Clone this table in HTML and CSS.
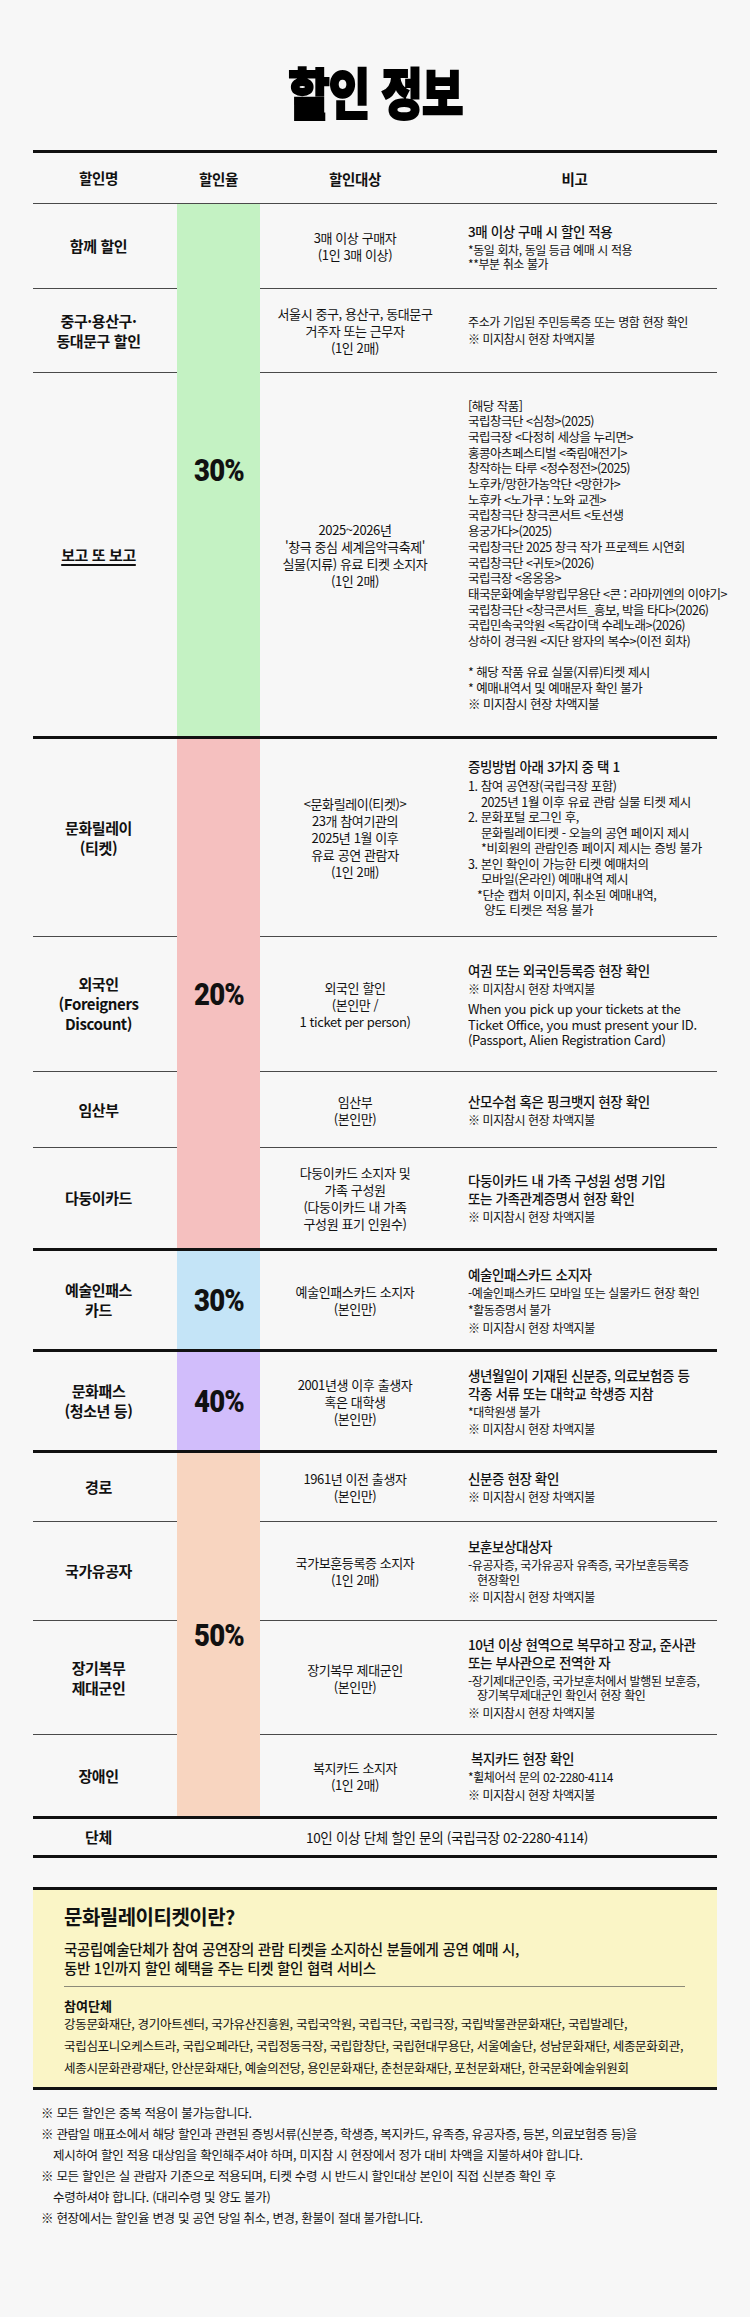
FILE: index.html
```html
<!DOCTYPE html>
<html lang="ko">
<head>
<meta charset="utf-8">
<title>할인 정보</title>
<link rel="stylesheet" href="styles.css">
</head>
<body>
<main class="page">
  <h1 class="title"><span>할인 정보</span></h1>

  <table class="dc">
    <colgroup><col class="c1"><col class="c2"><col class="c3"><col class="c4"></colgroup>
    <thead>
      <tr class="h52">
        <th class="nm">할인명</th><th>할인율</th><th>할인대상</th><th class="h4">비고</th>
      </tr>
    </thead>
    <tbody>
      <tr class="h85">
        <td class="nm">함께 할인</td>
        <td class="rate green" rowspan="3"><span>30%</span></td>
        <td class="tg">3매 이상 구매자<br>(1인 3매 이상)</td>
        <td class="nt"><p class="lead">3매 이상 구매 시 할인 적용</p><p class="sm tight">*동일 회차, 동일 등급 예매 시 적용<br>**부분 취소 불가</p></td>
      </tr>
      <tr class="h84">
        <td class="nm">중구·용산구·<br>동대문구 할인</td>
        <td class="tg">서울시 중구, 용산구, 동대문구<br>거주자 또는 근무자<br>(1인 2매)</td>
        <td class="nt"><p class="sm">주소가 기입된 주민등록증 또는 명함 현장 확인</p><p class="sm">※ 미지참시 현장 차액지불</p></td>
      </tr>
      <tr class="h365">
        <td class="nm"><u>보고 또 보고</u></td>
        <td class="tg">2025~2026년<br>'창극 중심 세계음악극축제'<br>실물(지류) 유료 티켓 소지자<br>(1인 2매)</td>
        <td class="nt"><p class="works">[해당 작품]<br>국립창극단 &lt;심청&gt;(2025)<br>국립극장 &lt;다정히 세상을 누리면&gt;<br>홍콩아츠페스티벌 &lt;죽림애전기&gt;<br>창작하는 타루 &lt;정수정전&gt;(2025)<br>노후카/망한가농악단 &lt;망한가&gt;<br>노후카 &lt;노가쿠 : 노와 교겐&gt;<br>국립창극단 창극콘서트 &lt;토선생<br>용궁가다&gt;(2025)<br>국립창극단 2025 창극 작가 프로젝트 시연회<br>국립창극단 &lt;귀토&gt;(2026)<br>국립극장 &lt;옹옹옹&gt;<br>태국문화예술부왕립무용단 &lt;콘 : 라마끼엔의 이야기&gt;<br>국립창극단 &lt;창극콘서트_흥보, 박을 타다&gt;(2026)<br>국립민속국악원 &lt;독갑이댁 수레노래&gt;(2026)<br>상하이 경극원 &lt;지단 왕자의 복수&gt;(이전 회차)<br><br>* 해당 작품 유료 실물(지류)티켓 제시<br>* 예매내역서 및 예매문자 확인 불가<br>※ 미지참시 현장 차액지불</p></td>
      </tr>

      <tr class="h199 gs">
        <td class="nm">문화릴레이<br>(티켓)</td>
        <td class="rate pink" rowspan="4"><span>20%</span></td>
        <td class="tg">&lt;문화릴레이(티켓)&gt;<br>23개 참여기관의<br>2025년 1월 이후<br>유료 공연 관람자<br>(1인 2매)</td>
        <td class="nt"><p class="lead">증빙방법 아래 3가지 중 택 1</p><p class="list">1. 참여 공연장(국립극장 포함)<br><span class="i1">2025년 1월 이후 유료 관람 실물 티켓 제시</span><br>2. 문화포털 로그인 후,<br><span class="i1">문화릴레이티켓 - 오늘의 공연 페이지 제시</span><br><span class="i1">*비회원의 관람인증 페이지 제시는 증빙 불가</span><br>3. 본인 확인이 가능한 티켓 예매처의<br><span class="i1">모바일(온라인) 예매내역 제시</span><br><span class="i2">*단순 캡처 이미지, 취소된 예매내역,</span><br><span class="i3">양도 티켓은 적용 불가</span></p></td>
      </tr>
      <tr class="h135">
        <td class="nm">외국인<br>(Foreigners<br>Discount)</td>
        <td class="tg">외국인 할인<br>(본인만 /<br>1 ticket per person)</td>
        <td class="nt"><p class="lead">여권 또는 외국인등록증 현장 확인</p><p class="sm">※ 미지참시 현장 차액지불</p><p class="en">When you pick up your tickets at the<br>Ticket Office, you must present your ID.<br>(Passport, Alien Registration Card)</p></td>
      </tr>
      <tr class="h76">
        <td class="nm">임산부</td>
        <td class="tg">임산부<br>(본인만)</td>
        <td class="nt"><p class="lead">산모수첩 혹은 핑크뱃지 현장 확인</p><p class="sm">※ 미지참시 현장 차액지불</p></td>
      </tr>
      <tr class="h102">
        <td class="nm">다둥이카드</td>
        <td class="tg">다둥이카드 소지자 및<br>가족 구성원<br>(다둥이카드 내 가족<br>구성원 표기 인원수)</td>
        <td class="nt"><p class="lead">다둥이카드 내 가족 구성원 성명 기입<br>또는 가족관계증명서 현장 확인</p><p class="sm">※ 미지참시 현장 차액지불</p></td>
      </tr>

      <tr class="h101 gs">
        <td class="nm">예술인패스<br>카드</td>
        <td class="rate blue"><span>30%</span></td>
        <td class="tg">예술인패스카드 소지자<br>(본인만)</td>
        <td class="nt"><p class="lead">예술인패스카드 소지자</p><p class="sm">-예술인패스카드 모바일 또는 실물카드 현장 확인</p><p class="sm">*활동증명서 불가</p><p class="sm">※ 미지참시 현장 차액지불</p></td>
      </tr>

      <tr class="h101 gs">
        <td class="nm">문화패스<br>(청소년 등)</td>
        <td class="rate purple"><span>40%</span></td>
        <td class="tg">2001년생 이후 출생자<br>혹은 대학생<br>(본인만)</td>
        <td class="nt"><p class="lead">생년월일이 기재된 신분증, 의료보험증 등<br>각종 서류 또는 대학교 학생증 지참</p><p class="sm">*대학원생 불가</p><p class="sm">※ 미지참시 현장 차액지불</p></td>
      </tr>

      <tr class="h70 gs">
        <td class="nm">경로</td>
        <td class="rate peach" rowspan="4"><span>50%</span></td>
        <td class="tg">1961년 이전 출생자<br>(본인만)</td>
        <td class="nt"><p class="lead">신분증 현장 확인</p><p class="sm">※ 미지참시 현장 차액지불</p></td>
      </tr>
      <tr class="h99">
        <td class="nm">국가유공자</td>
        <td class="tg">국가보훈등록증 소지자<br>(1인 2매)</td>
        <td class="nt"><p class="lead">보훈보상대상자</p><p class="sm">-유공자증, 국가유공자 유족증, 국가보훈등록증<br><span class="i0">현장확인</span></p><p class="sm">※ 미지참시 현장 차액지불</p></td>
      </tr>
      <tr class="h114">
        <td class="nm">장기복무<br>제대군인</td>
        <td class="tg">장기복무 제대군인<br>(본인만)</td>
        <td class="nt"><p class="lead">10년 이상 현역으로 복무하고 장교, 준사관<br>또는 부사관으로 전역한 자</p><p class="sm">-장기제대군인증, 국가보훈처에서 발행된 보훈증,<br><span class="i0">장기복무제대군인 확인서 현장 확인</span></p><p class="sm">※ 미지참시 현장 차액지불</p></td>
      </tr>
      <tr class="h83">
        <td class="nm">장애인</td>
        <td class="tg">복지카드 소지자<br>(1인 2매)</td>
        <td class="nt"><p class="lead sh">복지카드 현장 확인</p><p class="sm">*휠체어석 문의 02-2280-4114</p><p class="sm">※ 미지참시 현장 차액지불</p></td>
      </tr>

      <tr class="h39 gs">
        <td class="nm">단체</td>
        <td class="grp" colspan="3">10인 이상 단체 할인 문의 (국립극장 02-2280-4114)</td>
      </tr>
    </tbody>
  </table>

  <section class="relay">
    <h2 class="relay-title">문화릴레이티켓이란?</h2>
    <p class="relay-desc">국공립예술단체가 참여 공연장의 관람 티켓을 소지하신 분들에게 공연 예매 시,<br>동반 1인까지 할인 혜택을 주는 티켓 할인 협력 서비스</p>
    <hr class="relay-rule">
    <h3 class="relay-sub">참여단체</h3>
    <p class="relay-list">강동문화재단, 경기아트센터, 국가유산진흥원, 국립국악원, 국립극단, 국립극장, 국립박물관문화재단, 국립발레단,<br>국립심포니오케스트라, 국립오페라단, 국립정동극장, 국립합창단, 국립현대무용단, 서울예술단, 성남문화재단, 세종문화회관,<br>세종시문화관광재단, 안산문화재단, 예술의전당, 용인문화재단, 춘천문화재단, 포천문화재단, 한국문화예술위원회</p>
  </section>

  <ul class="notes">
    <li>※ 모든 할인은 중복 적용이 불가능합니다.</li>
    <li>※ 관람일 매표소에서 해당 할인과 관련된 증빙서류(신분증, 학생증, 복지카드, 유족증, 유공자증, 등본, 의료보험증 등)을<br>제시하여 할인 적용 대상임을 확인해주셔야 하며, 미지참 시 현장에서 정가 대비 차액을 지불하셔야 합니다.</li>
    <li>※ 모든 할인은 실 관람자 기준으로 적용되며, 티켓 수령 시 반드시 할인대상 본인이 직접 신분증 확인 후<br>수령하셔야 합니다. (대리수령 및 양도 불가)</li>
    <li>※ 현장에서는 할인율 변경 및 공연 당일 취소, 변경, 환불이 절대 불가합니다.</li>
  </ul>
</main>
</body>
</html>
```

FILE: styles.css
```css
* { box-sizing: border-box; }

html, body {
  margin: 0;
  padding: 0;
  background: #f7f7f7;
}

body {
  width: 750px;
  min-height: 2317px;
  font-family: "Noto Sans CJK KR", "Noto Sans", sans-serif;
  color: #111;
}

.page {
  padding: 0 33px;
}

.title {
  margin: 0;
  height: 150px;
  padding-top: 63px;
  text-align: center;
  font-size: 55px;
  line-height: 55px;
  font-weight: 900;
  letter-spacing: -1px;
  color: #000;
}

.title span {
  display: inline-block;
  transform: scaleX(0.82);
  -webkit-text-stroke: 2px #000;
}

/* ---------- table ---------- */
.dc {
  width: 684px;
  table-layout: fixed;
  border-collapse: collapse;
  border-top: 3px solid #111;
  border-bottom: 3px solid #111;
}

.c1 { width: 144px; }
.c2 { width: 83px; }
.c3 { width: 190px; }
.c4 { width: 267px; }

.dc th,
.dc td {
  padding: 0;
  border-bottom: 1px solid #4a4a4a;
  vertical-align: middle;
  text-align: center;
}

.dc th {
  font-size: 14.5px;
  font-weight: 700;
  letter-spacing: -0.3px;
}

.dc th.h4 { padding-right: 18px; }

.dc tr.gs > td { border-top: 3px solid #111; }

.h52 { height: 52px; }
.h85 { height: 85px; }
.h84 { height: 84px; }
.h365 { height: 365px; }
.h199 { height: 199px; }
.h135 { height: 135px; }
.h76 { height: 76px; }
.h102 { height: 102px; }
.h101 { height: 101px; }
.h70 { height: 70px; }
.h99 { height: 99px; }
.h114 { height: 114px; }
.h83 { height: 83px; }
.h39 { height: 39px; }

.nm {
  padding-right: 13px !important;
  font-size: 15px;
  line-height: 20px;
  font-weight: 700;
  letter-spacing: -0.4px;
}

.nm u { text-underline-offset: 3px; text-decoration-thickness: 1.5px; }

.rate {
  border-bottom: none !important;
}

.rate span {
  display: inline-block;
  font-family: Roboto, "Liberation Sans", sans-serif;
  font-size: 32px;
  font-weight: 900;
  letter-spacing: -1px;
  transform: scaleX(0.86);
}

.green { background: #c4f2c3; }
.pink { background: #f5c0bf; }
.blue { background: #c4e4f7; }
.purple { background: #d1bdfb; }
.peach { background: #f8d5c0; }

.tg {
  padding: 0 6px !important;
  font-size: 13px;
  line-height: 17px;
  letter-spacing: -0.4px;
}

.nt {
  padding: 0 2px 0 18px !important;
  text-align: left !important;
  letter-spacing: -0.4px;
}

.nt p { margin: 0; white-space: nowrap; }
.nt p + p { margin-top: 3px; }

.lead {
  font-size: 13.5px;
  line-height: 18px;
  font-weight: 500;
}

.lead.sh { padding-left: 3px; }

.sm {
  font-size: 12px;
  line-height: 14.5px;
}

.sm.tight { line-height: 13.5px; }

.i0 { padding-left: 9px; }
.i1 { padding-left: 13px; }
.i2 { padding-left: 9px; }
.i3 { padding-left: 16px; }

.works {
  font-size: 12.5px;
  line-height: 15.67px;
  letter-spacing: -0.5px;
}

.list {
  font-size: 12.5px;
  line-height: 15.5px;
}

.nt p.en {
  margin-top: 5px;
  font-size: 13px;
  line-height: 15.5px;
  letter-spacing: -0.3px;
}

.grp {
  font-size: 13.5px;
  letter-spacing: -0.3px;
}

/* ---------- relay box ---------- */
.relay {
  margin-top: 29px;
  padding: 14px 32px 8px 31px;
  background: #faf5c6;
  border-top: 3px solid #111;
  border-bottom: 3px solid #111;
}

.relay-title {
  margin: 0;
  font-size: 20px;
  line-height: 26px;
  font-weight: 700;
  letter-spacing: -0.5px;
}

.relay-desc {
  margin: 9px 0 0;
  font-size: 14.5px;
  line-height: 19px;
  font-weight: 500;
  letter-spacing: -0.3px;
}

.relay-rule {
  margin: 9px 0 0;
  border: 0;
  border-top: 1.5px solid #8c8a78;
  height: 0;
}

.relay-sub {
  margin: 11px 0 0;
  font-size: 13px;
  line-height: 16px;
  font-weight: 700;
}

.relay-list {
  margin: -1px 0 0;
  font-size: 12.5px;
  line-height: 22px;
  letter-spacing: -0.3px;
  white-space: nowrap;
}

/* ---------- notes ---------- */
.notes {
  list-style: none;
  margin: 0;
  padding: 12px 0 0 8px;
  font-size: 12.5px;
  line-height: 21px;
  letter-spacing: -0.3px;
}

.notes li {
  padding-left: 12px;
  text-indent: -12px;
  white-space: nowrap;
}
```
